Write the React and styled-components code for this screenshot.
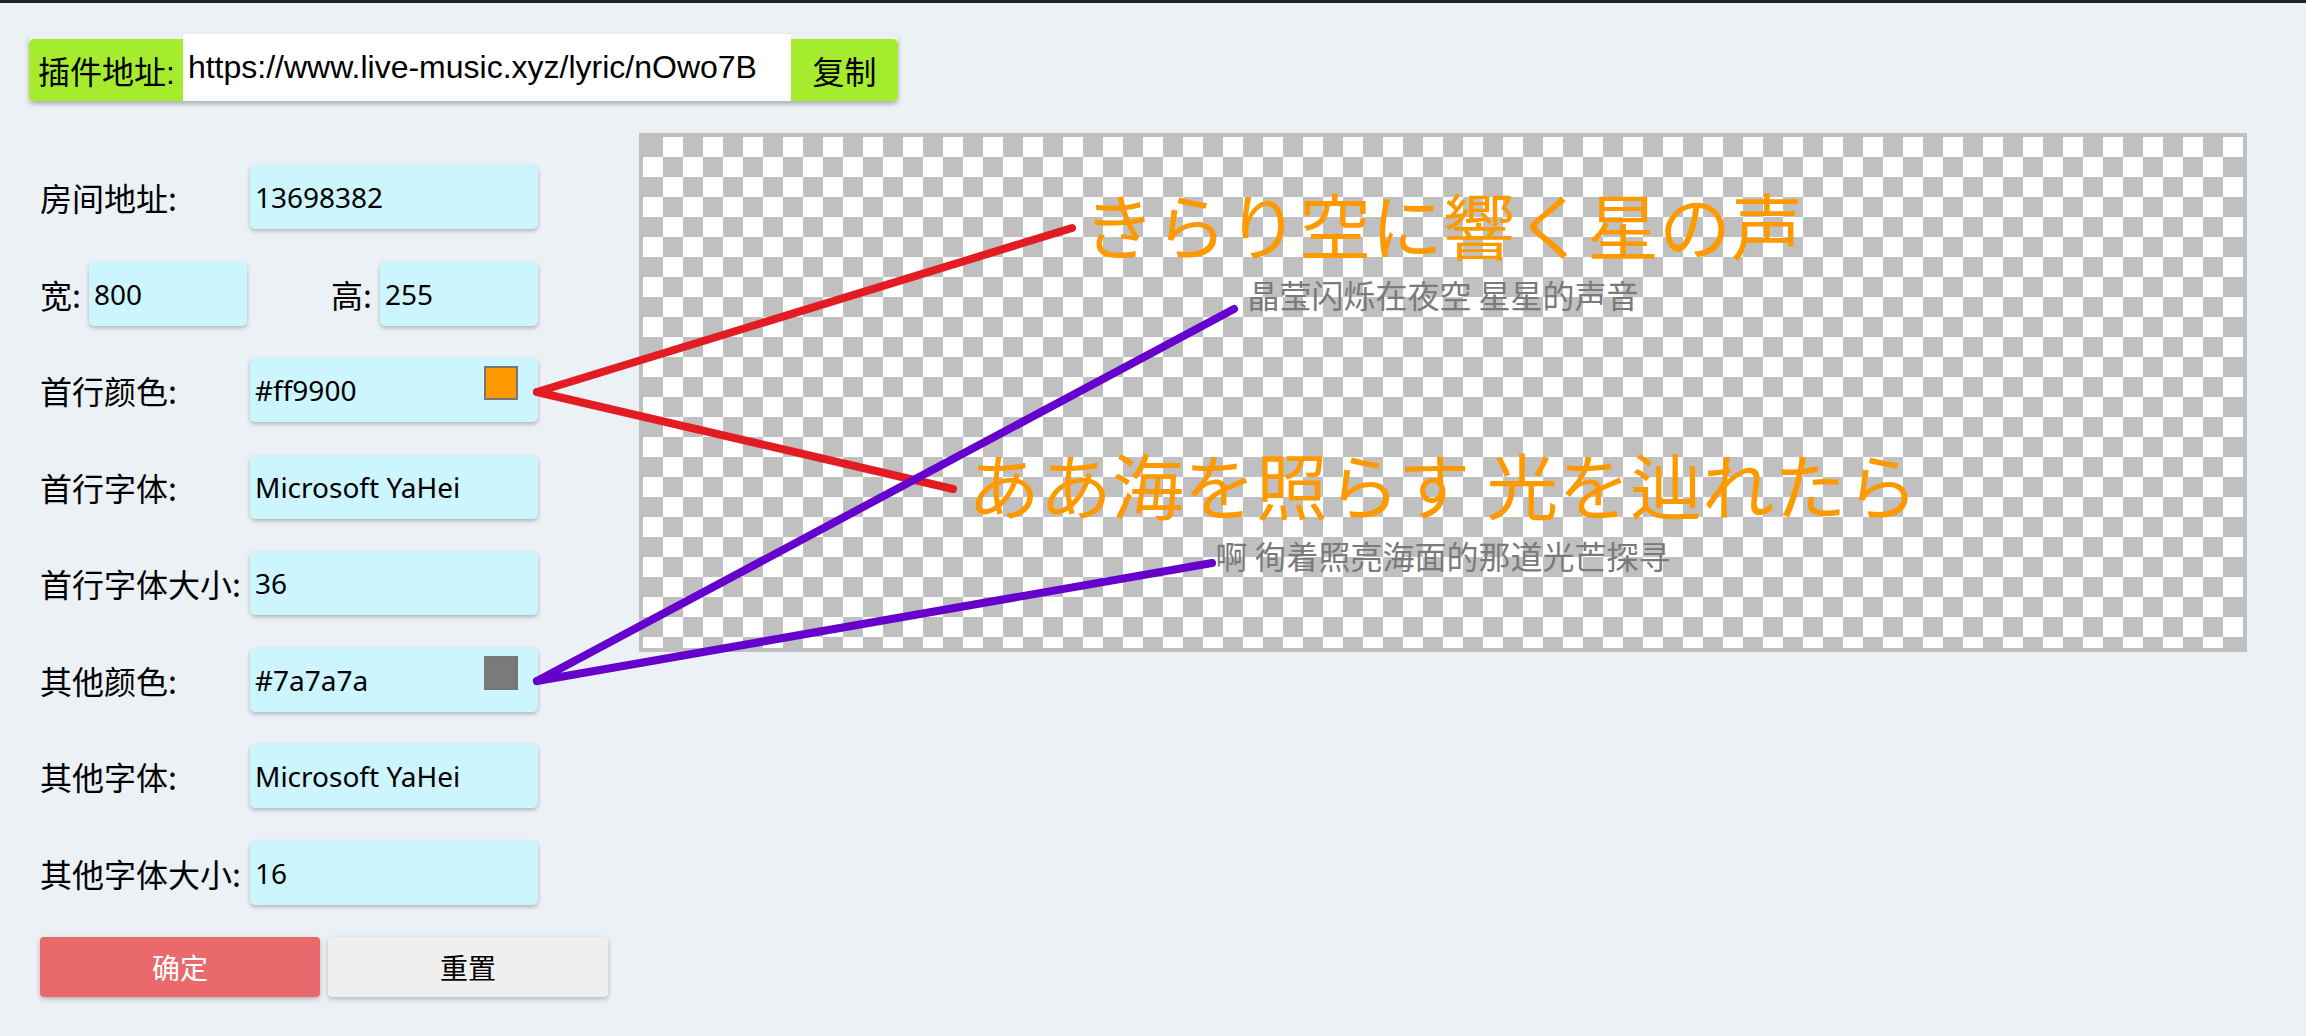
import React from "react";
import styled, { createGlobalStyle } from "styled-components";

const GlobalStyle = createGlobalStyle`
  body {
    margin: 0;
    background: #ecf1f5;
    font-family: "Noto Sans", "Noto Sans CJK SC", sans-serif;
  }
`;

const fields = [
  { label: "房间地址:", value: "13698382" },
  { pair: [{ label: "宽:", value: "800" }, { label: "高:", value: "255" }] },
  { label: "首行颜色:", value: "#ff9900", swatch: "#ff9900" },
  { label: "首行字体:", value: "Microsoft YaHei" },
  { label: "首行字体大小:", value: "36" },
  { label: "其他颜色:", value: "#7a7a7a", swatch: "#7a7a7a" },
  { label: "其他字体:", value: "Microsoft YaHei" },
  { label: "其他字体大小:", value: "16" },
];

const App = () => {
  return (
    <Wrapper>
      <GlobalStyle />
      <TopRule />
      <Page>
        <Bar>
          <BarLabel>插件地址:</BarLabel>
          <BarInput readOnly value="https://www.live-music.xyz/lyric/nOwo7B" />
          <CopyButton>复制</CopyButton>
        </Bar>
        <Main>
          <Form>
            {fields.map((f, i) =>
              f.pair ? (
                <Row key={i} $split>
                  {f.pair.map((p) => (
                    <Group key={p.label}>
                      <Label>{p.label}</Label>
                      <Field $w={158}>
                        <FieldInput readOnly value={p.value} />
                      </Field>
                    </Group>
                  ))}
                </Row>
              ) : (
                <Row key={i}>
                  <Label $min={202}>{f.label}</Label>
                  <Field>
                    <FieldInput readOnly value={f.value} />
                    {f.swatch && <Swatch $color={f.swatch} />}
                  </Field>
                </Row>
              )
            )}
            <Buttons>
              <Button $bg="#e9696d" $fg="#fff">
                确定
              </Button>
              <Button $bg="#efefef" $fg="#000">
                重置
              </Button>
            </Buttons>
          </Form>
          <Preview>
            <Lyric $size={72} $color="#ff9900" $gap={0}>
              きらり空に響く星の声
            </Lyric>
            <Lyric $size={32} $color="#7a7a7a" $gap={19}>
              晶莹闪烁在夜空 星星的声音
            </Lyric>
            <Lyric $size={72} $color="#ff9900" $gap={137}>
              ああ海を照らす 光を辿れたら
            </Lyric>
            <Lyric $size={32} $color="#7a7a7a" $gap={20}>
              啊 徇着照亮海面的那道光芒探寻
            </Lyric>
          </Preview>
        </Main>
      </Page>
      <Overlay viewBox="0 0 2306 1036">
        <g strokeWidth="8" strokeLinecap="round" fill="none">
          <line x1="537" y1="392" x2="1072" y2="228" stroke="#e31c23" />
          <line x1="537" y1="392" x2="953" y2="489" stroke="#e31c23" />
          <line x1="537" y1="681" x2="1234" y2="309" stroke="#6600cc" />
          <line x1="537" y1="681" x2="1212" y2="563" stroke="#6600cc" />
        </g>
      </Overlay>
    </Wrapper>
  );
};

export default App;

const Wrapper = styled.div`
  position: relative;
  min-height: 1036px;
`;

const TopRule = styled.div`
  height: 3px;
  background: #222;
`;

const Page = styled.div`
  padding-top: 31px;
`;

const Bar = styled.div`
  display: flex;
  align-items: flex-end;
  width: fit-content;
  margin-left: 29px;
  border-radius: 5px;
  box-shadow: 0 3px 5px rgba(0, 0, 0, 0.28);
  font: 32px "Liberation Sans", "Noto Sans CJK SC", sans-serif;
`;

const BarLabel = styled.div`
  height: 62px;
  display: flex;
  align-items: center;
  padding: 0 8px 0 9px;
  background: #a6ec2e;
  border-radius: 5px 0 0 5px;
  color: #000;
`;

const BarInput = styled.input`
  width: 608px;
  height: 67px;
  box-sizing: border-box;
  border: none;
  padding: 0 0 0 5px;
  background: #fff;
  font: inherit;
  color: #000;
  outline: none;
`;

const CopyButton = styled.button`
  width: 107px;
  height: 62px;
  border: none;
  padding: 0;
  background: #a6ec2e;
  border-radius: 0 5px 5px 0;
  font: inherit;
  color: #000;
`;

const Main = styled.div`
  display: flex;
  align-items: flex-start;
  gap: 31px;
  margin-top: 32px;
  padding-left: 40px;
`;

const Form = styled.div`
  width: 568px;
  padding-top: 32px;
  display: flex;
  flex-direction: column;
`;

const Row = styled.div`
  display: flex;
  align-items: center;
  justify-content: ${(p) => (p.$split ? "space-between" : "flex-start")};
  gap: 8px;
  width: 498px;
  height: 64px;
  margin-bottom: 32.5px;
`;

const Group = styled.div`
  display: flex;
  align-items: center;
  gap: 8px;
`;

const Label = styled.span`
  min-width: ${(p) => (p.$min ? `${p.$min}px` : "0")};
  font: 32px "Noto Sans CJK SC", sans-serif;
  color: #000;
  white-space: nowrap;
`;

const Field = styled.div`
  width: ${(p) => p.$w || 288}px;
  height: 64px;
  box-sizing: border-box;
  display: flex;
  align-items: center;
  padding: 0 20px 0 5px;
  background: #ccf5fe;
  border-radius: 5px;
  box-shadow: 0 2px 4px rgba(0, 0, 0, 0.25);
`;

const FieldInput = styled.input`
  flex: 1;
  min-width: 0;
  border: none;
  padding: 0;
  background: transparent;
  font: 28px "Noto Sans", "Noto Sans CJK SC", sans-serif;
  color: #000;
  outline: none;
`;

const Swatch = styled.span`
  align-self: flex-start;
  margin-top: 8px;
  width: 34px;
  height: 34px;
  box-sizing: border-box;
  border: 2px solid #777;
  background: ${(p) => p.$color};
`;

const Buttons = styled.div`
  display: flex;
  gap: 8px;
`;

const Button = styled.button`
  width: 280px;
  height: 60px;
  border: none;
  border-radius: 4px;
  background: ${(p) => p.$bg};
  color: ${(p) => p.$fg};
  font: 28px "Noto Sans CJK SC", sans-serif;
  box-shadow: 0 2px 5px rgba(0, 0, 0, 0.25);
`;

const Preview = styled.div`
  width: 1600px;
  height: 461px;
  padding-top: 50px;
  border: 4px solid #c0c0c0;
  display: flex;
  flex-direction: column;
  align-items: center;
  background-color: #fff;
  background-image: conic-gradient(
    #fff 25%,
    #c0c0c0 0 50%,
    #fff 0 75%,
    #c0c0c0 0
  );
  background-size: 40px 40px;
  font-family: "Noto Sans CJK JP", "Noto Sans CJK SC", sans-serif;
`;

const Lyric = styled.div`
  font-size: ${(p) => p.$size}px;
  line-height: 1;
  color: ${(p) => p.$color};
  margin-top: ${(p) => p.$gap}px;
  white-space: pre;
`;

const Overlay = styled.svg`
  position: absolute;
  top: 0;
  left: 0;
  width: 2306px;
  height: 1036px;
  pointer-events: none;
`;
